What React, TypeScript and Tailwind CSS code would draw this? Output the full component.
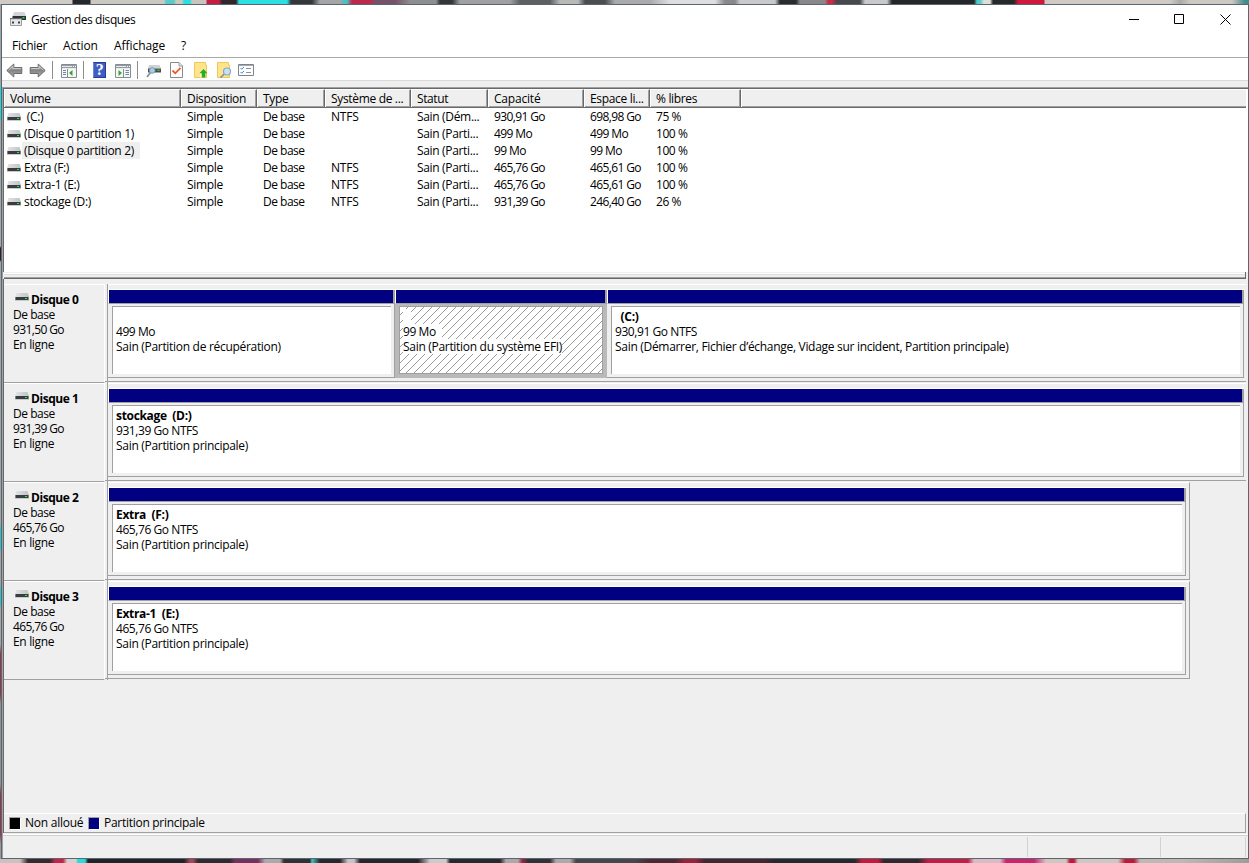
import React from "react";

const columns = [
  { label: "Volume", head: "w-[177px] pl-[5px]", cell: "w-[177px]" },
  { label: "Disposition", head: "w-[76px] pl-[5px]", cell: "w-[76px] pl-[6px]" },
  { label: "Type", head: "w-[68px] pl-[5px]", cell: "w-[68px] pl-[6px] tracking-[-0.500px]" },
  { label: "Système de ...", head: "w-[86px] pl-[5px]", cell: "w-[86px] pl-[6px] tracking-[-0.200px]" },
  { label: "Statut", head: "w-[77px] pl-[5px] tracking-[-0.400px]", cell: "w-[77px] pl-[6px]" },
  { label: "Capacité", head: "w-[96px] pl-[5px] tracking-[-0.200px]", cell: "w-[96px] pl-[6px] tracking-[-0.620px]" },
  { label: "Espace li...", head: "w-[66px] pl-[5px]", cell: "w-[66px] pl-[6px] tracking-[-0.620px]" },
  { label: "% libres", head: "w-[91px] pl-[5px]", cell: "w-[91px] pl-[6px] tracking-[-0.450px]" },
];

const volumes = [
  ["\u00a0(C:)", "Simple", "De base", "NTFS", "Sain (Dém...", "930,91 Go", "698,98 Go", "75 %"],
  ["(Disque 0 partition 1)", "Simple", "De base", "", "Sain (Parti...", "499 Mo", "499 Mo", "100 %"],
  ["(Disque 0 partition 2)", "Simple", "De base", "", "Sain (Parti...", "99 Mo", "99 Mo", "100 %"],
  ["Extra (F:)", "Simple", "De base", "NTFS", "Sain (Parti...", "465,76 Go", "465,61 Go", "100 %"],
  ["Extra-1 (E:)", "Simple", "De base", "NTFS", "Sain (Parti...", "465,76 Go", "465,61 Go", "100 %"],
  ["stockage (D:)", "Simple", "De base", "NTFS", "Sain (Parti...", "931,39 Go", "246,40 Go", "26 %"],
];

type Part = { width: string; name: string; size: string; status: string; selected?: boolean };
type Disk = { name: string; size: string; panel: string; parts: Part[] };

const disks: Disk[] = [
  {
    name: "Disque 0",
    size: "931,50 Go",
    panel: "w-[1138px]",
    parts: [
      { width: "w-[287px]", name: "", size: "499 Mo", status: "Sain (Partition de récupération)" },
      { width: "w-[212px]", name: "", size: "99 Mo", status: "Sain (Partition du système EFI)", selected: true },
      {
        width: "w-[637px]",
        name: "\u00a0\u00a0(C:)",
        size: "930,91 Go NTFS",
        status: "Sain (Démarrer, Fichier d’échange, Vidage sur incident, Partition principale)",
      },
    ],
  },
  {
    name: "Disque 1",
    size: "931,39 Go",
    panel: "w-[1138px]",
    parts: [{ width: "w-[1136px]", name: "stockage\u00a0 (D:)", size: "931,39 Go NTFS", status: "Sain (Partition principale)" }],
  },
  {
    name: "Disque 2",
    size: "465,76 Go",
    panel: "w-[1082px] border-r border-r-[#a0a0a0]",
    parts: [{ width: "w-[1078px]", name: "Extra\u00a0 (F:)", size: "465,76 Go NTFS", status: "Sain (Partition principale)" }],
  },
  {
    name: "Disque 3",
    size: "465,76 Go",
    panel: "w-[1082px] border-r border-r-[#a0a0a0]",
    parts: [{ width: "w-[1078px]", name: "Extra-1\u00a0 (E:)", size: "465,76 Go NTFS", status: "Sain (Partition principale)" }],
  },
];

function Drive() {
  return (
    <svg width="14" height="8" viewBox="0 0 14 8" className="shrink-0">
      <defs>
        <linearGradient id="lid" x1="0" x2="1">
          <stop offset="0" stopColor="#e2e4e6" />
          <stop offset="1" stopColor="#bfc3c7" />
        </linearGradient>
      </defs>
      <path d="M1.500 0H12.500L14 4H0Z" fill="url(#lid)" />
      <rect y="4" width="14" height="4" fill="#c9cccf" />
      <rect x="0.500" y="4" width="13" height="3" fill="#3a3d40" />
      <rect x="10" y="5" width="2" height="1" fill="#19f03c" />
    </svg>
  );
}

function Arrow({ flip }: { flip?: boolean }) {
  return (
    <svg width="17" height="16" viewBox="0 0 17 16" className={flip ? "-scale-x-100" : ""}>
      <defs>
        <linearGradient id="arrow" x1="0" x2="0" y1="0" y2="1">
          <stop offset="0" stopColor="#c4c4c4" />
          <stop offset="0.5" stopColor="#858585" />
          <stop offset="1" stopColor="#b0b0b0" />
        </linearGradient>
      </defs>
      <path d="M.8 8.500 7.800 2V5.500H15.800V11.500H7.800V15Z" fill="url(#arrow)" stroke="#6b6b6b" />
      <path d="M2.500 8.300 6.800 4.300V6.500H14.800" fill="none" stroke="#d5d5d5" strokeWidth=".8" />
    </svg>
  );
}

function PaneIcon({ flip }: { flip?: boolean }) {
  return (
    <svg width="16" height="14" viewBox="0 0 16 14">
      <path d="M.5.5H15.500V13.500H.5Z" fill="#f7f7f7" stroke="#868c93" />
      <path d="M1 1H15V4H1Z" fill="#969ca3" />
      <path d="M1 2.500H11M1 4.500H15" stroke="#e8ebee" />
      <path d="M12 2.500h1M14 2.500h1" stroke="#fff" />
      {flip ? (
        <>
          <path d="M8.500 5V13" stroke="#868c93" />
          <path d="M10.500 6.500H14M10.500 8.500H14M10.500 10.500H14" stroke="#6f87a5" />
          <path d="M3.500 6V12L7 9Z" fill="#38a52d" />
        </>
      ) : (
        <>
          <path d="M6.500 5V13" stroke="#868c93" />
          <path d="M2 6.500H5M2 8.500H5M2 10.500H5" stroke="#6f87a5" />
          <path d="M11.500 6V12L8 9Z" fill="#38a52d" />
        </>
      )}
    </svg>
  );
}

function HelpIcon() {
  return (
    <span className="flex h-4 w-[13px] items-center justify-center border border-[#263c97] border-l-[#7188d8] bg-[#3f5ec4] font-['Liberation_Serif',serif] text-[16px] leading-none font-bold text-white">
      ?
    </span>
  );
}

function DriveSearch() {
  return (
    <svg width="16" height="14" viewBox="0 0 16 14">
      <path d="M3 1H13.500L15 4.500H2Z" fill="#cfd2d5" />
      <path d="M2 4.500H15V8.500H2Z" fill="#4a4e52" />
      <path d="M11.500 5.500h2v1.500h-2Z" fill="#1fdc3d" />
      <circle cx="6.300" cy="6.500" r="2.800" fill="#a7cde9" stroke="#7d99b0" />
      <path d="M4.300 8.800 1 13" stroke="#8b8f94" strokeWidth="1.800" />
    </svg>
  );
}

function DocCheck() {
  return (
    <svg width="13" height="16" viewBox="0 0 13 16">
      <path d="M.5.5H9L12.500 4V15.500H.5Z" fill="#fff" stroke="#8a8a8a" />
      <path d="M9 .5V4h3.500" fill="#e4e4e4" stroke="#9b9b9b" />
      <path d="M2.500 8.500 5.300 11.300 10.500 5.800" fill="none" stroke="#f05a22" strokeWidth="1.800" />
    </svg>
  );
}

function FolderUp() {
  return (
    <svg width="14" height="16" viewBox="0 0 14 16">
      <path d="M.5.5H11.500V3H12.500V15.500H.5Z" fill="#ffe48c" stroke="#edc95c" />
      <path d="M6 15.500V10.500H7.800V15.500" fill="#fff0bd" />
      <path d="M9.500 7 13.500 11.300H11.300V15.500H7.800V11.300H5.500Z" fill="#20b129" />
    </svg>
  );
}

function FolderSearch() {
  return (
    <svg width="15" height="16" viewBox="0 0 15 16">
      <path d="M.5.5H11.500V3H12.500V15.500H.5Z" fill="#ffe48c" stroke="#edc95c" />
      <path d="M7.300 12 3.500 15.700" stroke="#8b8f94" strokeWidth="1.700" />
      <circle cx="10" cy="9.500" r="3.500" fill="#c4e3f6" stroke="#86a9c2" strokeWidth="1.200" />
    </svg>
  );
}

function ListIcon() {
  return (
    <svg width="16" height="12" viewBox="0 0 16 12">
      <path d="M.5.5H15.500V11.500H.5Z" fill="#fff" stroke="#7e858c" />
      <path d="M1 1.200H15" stroke="#7e858c" />
      <path d="m2.500 4 1.200 1.200L6 3M2.500 8l1.200 1.200L6 7" fill="none" stroke="#3688dc" />
      <path d="M8 4.500H13M8 8.500H13" stroke="#8d939a" />
    </svg>
  );
}

function TitleIcon() {
  return (
    <svg width="17" height="16" viewBox="0 0 17 16">
      <path d="M4 1H14.500L16 5H2.500Z" fill="#d3d6d9" />
      <path d="M2.500 5H16V9H2.500Z" fill="#303336" />
      <path d="M12.500 6h2v1.500h-2Z" fill="#23e03f" />
      <path d="M.5 7.500H11.500V14.500H.5Z" fill="#e6e8ea" stroke="#9b9fa3" />
      <path d="M0 7H12V8.200H0Z" fill="#6a6d70" />
      <path d="M2 10.500H4V12.500H2ZM8 10.500H10V12.500H8Z" fill="#3d4043" />
    </svg>
  );
}

function Separator({ className }: { className: string }) {
  return <span className={`h-[18px] w-px bg-[#8d8d8d] ${className}`} />;
}

function Partition({ part }: { part: Part }) {
  const textBg = part.selected ? "bg-white" : "";
  return (
    <div className={`flex h-[89px] shrink-0 flex-col ${part.width}`}>
      <div className="flex h-[15px] border-b border-l border-t border-[#a0a0a0] border-l-white border-t-white">
        <div className="grow bg-[#000080]" />
        <div className="w-[2px] bg-[#a0a0a0]" />
      </div>
      <div
        className={`flex grow border-r border-b border-[#a0a0a0] pt-[2px] pr-[3px] pb-[3px] pl-[4px] ${
          part.selected ? "border-[#b9b9b9] bg-[#b9b9b9]" : ""
        }`}
      >
        <div
          className={`flex grow flex-col items-start border-t border-l border-[#a0a0a0] pt-[2px] pl-[3px] ${
            part.selected
              ? "border-r border-b bg-white bg-[repeating-linear-gradient(135deg,transparent_0_4.950px,#9a9a9a_4.950px_5.657px)]"
              : "bg-white"
          }`}
        >
          <div className={`h-[15px] min-w-[8px] font-bold tracking-[-0.320px] ${textBg}`}>{part.name}</div>
          <div className={`h-[15px] tracking-[-0.430px] ${textBg} ${part.selected ? "pr-[6px]" : ""}`}>{part.size}</div>
          <div className={`h-[15px] tracking-[-0.300px] ${textBg}`}>{part.status}</div>
        </div>
      </div>
    </div>
  );
}

function DiskRow({ disk }: { disk: Disk }) {
  return (
    <div className="flex h-[99px] shrink-0">
      <div className="w-[101px] border-t border-r border-b border-white border-b-[#a0a0a0] pt-[7px] pl-[9px] leading-[15px]">
        <div className="flex h-[15px] pl-[2px]">
          <span className="pt-px">
            <Drive />
          </span>
          <span className="pl-[2px] font-bold tracking-[-0.450px]">{disk.name}</span>
        </div>
        <div className="h-[15px] tracking-[-0.450px]">De base</div>
        <div className="h-[15px] tracking-[-0.620px]">{disk.size}</div>
        <div className="h-[15px]">En ligne</div>
      </div>
      <div className="h-[98px] w-[2px] border-b border-[#a0a0a0]" />
      <div className="w-px bg-[#a0a0a0]" />
      <div className={`flex h-[98px] border-t border-b border-t-white border-b-[#a0a0a0] pt-[4px] leading-[15px] ${disk.panel}`}>
        {disk.parts.map((p, i) => (
          <Partition key={i} part={p} />
        ))}
      </div>
    </div>
  );
}

export default function App() {
  return (
    <div className="flex h-[863px] w-[1249px] flex-col overflow-hidden bg-[#efefef] font-['Open_Sans','Noto_Sans',sans-serif] text-[12px] leading-[17px] tracking-[-0.330px] whitespace-nowrap text-black">
      <div className="h-1 shrink-0 bg-[linear-gradient(90deg,#d1cbc7_0_72px,#24272b_73px_90px,#cbc8c2_91px_164px,#5bcaca_166px_174px,#cbc8c2_176px_182px,#29dfe0_184px_190px,#c8c4bf_192px_206px,#c51e42_207px_219px,#31262a_222px_236px,#2cdfe2_239px_287px,#35383b_291px_312px,#a5a5a6_320px_341px,#52bec0_343px_347px,#bd294c_352px_370px,#765268_375px_395px,#8c8e8f_410px_436px,#323638_440px_452px,#a0a0a0_460px_510px,#5d6062_520px_550px,#b9b9b8_560px_578px,#4b4d4e_585px_605px,#aaaaaa_615px_650px,#dedede_670px_715px,#888_725px_735px,#c9c9c9_740px_775px,#292c2f_780px_796px,#888_800px_825px,#c92c49_828px_832px,#46494c_837px_860px,#c9c9c9_865px_887px,#242629_892px_974px,#4dcccf_977px_980px,#e2dfda_984px_990px,#26292c_993px_1014px,#cf183b_1018px_1044px,#d0c9c4_1045px_1170px,#a9aaa7_1180px,#cec8c3_1190px_1232px,#438b8c_1245px)]" />
      <div className="flex min-h-0 flex-1">
        <div className="w-px bg-[linear-gradient(#a2a3a1_0_80px,#1adadd_84px_115px,#a5a9a9_117px_242px,#321f24_244px_256px,#a0a7a7_258px_520px,#20cacc_525px_545px,#a3a6a6_548px_580px,#22cacc_585px_600px,#a6a6a6_604px_640px,#9b3446_650px_690px,#8d9394_700px_780px,#9b3446_790px_830px,#999_840px)]" />
        <div className="flex w-[1248px] flex-col border border-[#5a6672] bg-[#efefef]">
          <header className="flex h-[27px] shrink-0 items-center bg-white pl-[8px]">
            <TitleIcon />
            <span className="pt-px pl-[4px] tracking-[-0.420px]">Gestion des disques</span>
            <div className="ml-auto flex items-center pt-px pr-[17px]">
              <svg width="10" height="10" className="mr-[35px]">
                <path d="M0 5.500H10" stroke="#000" />
              </svg>
              <svg width="10" height="10" className="mr-[36px]">
                <path d="M.5.5H9.500V9.500H.5Z" fill="none" stroke="#000" />
              </svg>
              <svg width="11" height="11" viewBox="0 0 11 11">
                <path d="M.5.5 10.500 10.500M10.500.5.5 10.500" stroke="#000" />
              </svg>
            </div>
          </header>
          <nav className="flex h-[25px] shrink-0 bg-white pt-[5px] pl-[10px]">
            <span className="w-[51px] tracking-[-0.250px]">Fichier</span>
            <span className="w-[51px] tracking-[-0.050px]">Action</span>
            <span className="w-[67px] tracking-[-0.050px]">Affichage</span>
            <span>?</span>
          </nav>
          <div className="flex h-[24px] shrink-0 items-center border-t border-b border-[#a9a9a9] border-b-[#d9d9d9] bg-white pt-[2px] pl-[4px]">
            <Arrow />
            <span className="ml-[6px] flex">
              <Arrow flip />
            </span>
            <Separator className="ml-[6px]" />
            <span className="ml-[8px] pt-[2px]">
              <PaneIcon />
            </span>
            <Separator className="ml-[6px]" />
            <span className="ml-[9px]">
              <HelpIcon />
            </span>
            <span className="ml-[9px] pt-[2px]">
              <PaneIcon flip />
            </span>
            <Separator className="ml-[6px]" />
            <span className="ml-[8px] pt-[2px]">
              <DriveSearch />
            </span>
            <span className="ml-[8px]">
              <DocCheck />
            </span>
            <span className="ml-[11px]">
              <FolderUp />
            </span>
            <span className="ml-[9px]">
              <FolderSearch />
            </span>
            <span className="ml-[6px]">
              <ListIcon />
            </span>
          </div>
          <div className="h-[6px] shrink-0" />

          <div className="flex min-h-0 flex-1 flex-col border-l border-[#a0a0a0]">
            <main className="flex h-[746px] shrink-0 flex-col border-t border-[#a0a0a0]">
              <section className="flex h-[184px] shrink-0 flex-col border-t border-l border-[#696969] bg-white">
                <div className="flex h-[19px] w-[1242px] shrink-0 border-b border-[#696969]">
                  {columns.map((c) => (
                    <div
                      key={c.label}
                      className={`h-[18px] shrink-0 border-t border-r border-l border-white border-r-[#696969] bg-[#efefef] shadow-[inset_-1px_-1px_0_#a0a0a0] ${c.head}`}
                    >
                      {c.label}
                    </div>
                  ))}
                  <div className="h-[18px] grow border-t border-l border-white bg-[#efefef] shadow-[inset_0_-1px_0_#a0a0a0]" />
                </div>
                <div>
                  {volumes.map((row, r) => (
                    <div key={r} className="flex h-[17px]">
                      {row.map((v, i) =>
                        i === 0 ? (
                          <div key={i} className={`flex items-center pl-[3px] ${columns[i].cell}`}>
                            <Drive />
                            <span className={`ml-px pl-[2px] ${r === 2 ? "w-[118px] bg-[#efefef]" : ""}`}>{v}</span>
                          </div>
                        ) : (
                          <div key={i} className={columns[i].cell}>
                            {v}
                          </div>
                        ),
                      )}
                    </div>
                  ))}
                </div>
              </section>
              <div className="ml-px flex h-[7px] w-[1242px] shrink-0 flex-col border-r border-[#696969]">
                <div className="h-px bg-[#efefef]" />
                <div className="h-px bg-white" />
                <div className="h-[3px] border-t border-[#dedede]" />
                <div className="h-px bg-[#a0a0a0]" />
                <div className="h-px bg-[#696969]" />
              </div>
              <section className="flex grow flex-col border-l border-[#696969] pt-[5px]">
                {disks.map((d) => (
                  <DiskRow key={d.name} disk={d} />
                ))}
                <div className="grow" />
                <footer className="flex h-[20px] w-[1242px] shrink-0 items-center border-t border-r border-b border-white border-r-[#a0a0a0] border-b-[#a0a0a0] pl-[5px]">
                  <span className="h-[13px] w-[12px] border border-[#a0a0a0] border-r-white border-b-white bg-black" />
                  <span className="w-[67px] pb-px pl-[4px] tracking-[-0.250px]">Non alloué</span>
                  <span className="h-[13px] w-[12px] border border-[#a0a0a0] border-r-white border-b-white bg-[#000080]" />
                  <span className="pb-px pl-[4px] tracking-[-0.280px]">Partition principale</span>
                </footer>
              </section>
            </main>
            <div className="h-px shrink-0" />
            <div className="h-px shrink-0 bg-white" />
            <div className="flex grow border-t border-[#d2d2d2] pt-px pb-px">
              <div className="w-[1025px] border-r border-[#d2d2d2]" />
              <div className="w-[133px] border-r border-[#d2d2d2]" />
              <div className="w-[85px] border-r border-[#d2d2d2]" />
            </div>
          </div>
        </div>
      </div>
      <div className="h-1 shrink-0 bg-[linear-gradient(90deg,#c9c3bf_0_20px,#332c2f_28px_50px,#c12648_55px_63px,#d5cfcd_67px_76px,#27dadb_78px_85px,#202427_88px_184px,#a5455c_190px_193px,#2c2d31_198px_230px,#75315f_235px_258px,#aaa_265px_280px,#303336_284px_310px,#3ac5c8_312px,#26292c_320px_340px,#c5c5c5_348px_354px,#24272a_360px_418px,#cbcbcb_430px_446px,#272a2d_450px_500px,#a9a9a9_506px_518px,#9c2940_522px,#303336_528px_550px,#aaa_556px_570px,#45484a_576px_635px,#4b2932_650px_675px,#97243c_685px_695px,#40282e_705px_765px,#26292c_775px_855px,#c31b3c_862px_878px,#30282c_884px_918px,#c11d45_928px_968px,#d9bbc5_974px_1000px,#ca256d_1006px_1034px,#cfc6c2_1046px_1066px,#c4183b_1070px_1074px,#cdc8c3_1078px_1118px,#c01b36_1125px_1134px,#beb9b4_1140px_1180px,#9d9d99)]" />
    </div>
  );
}
